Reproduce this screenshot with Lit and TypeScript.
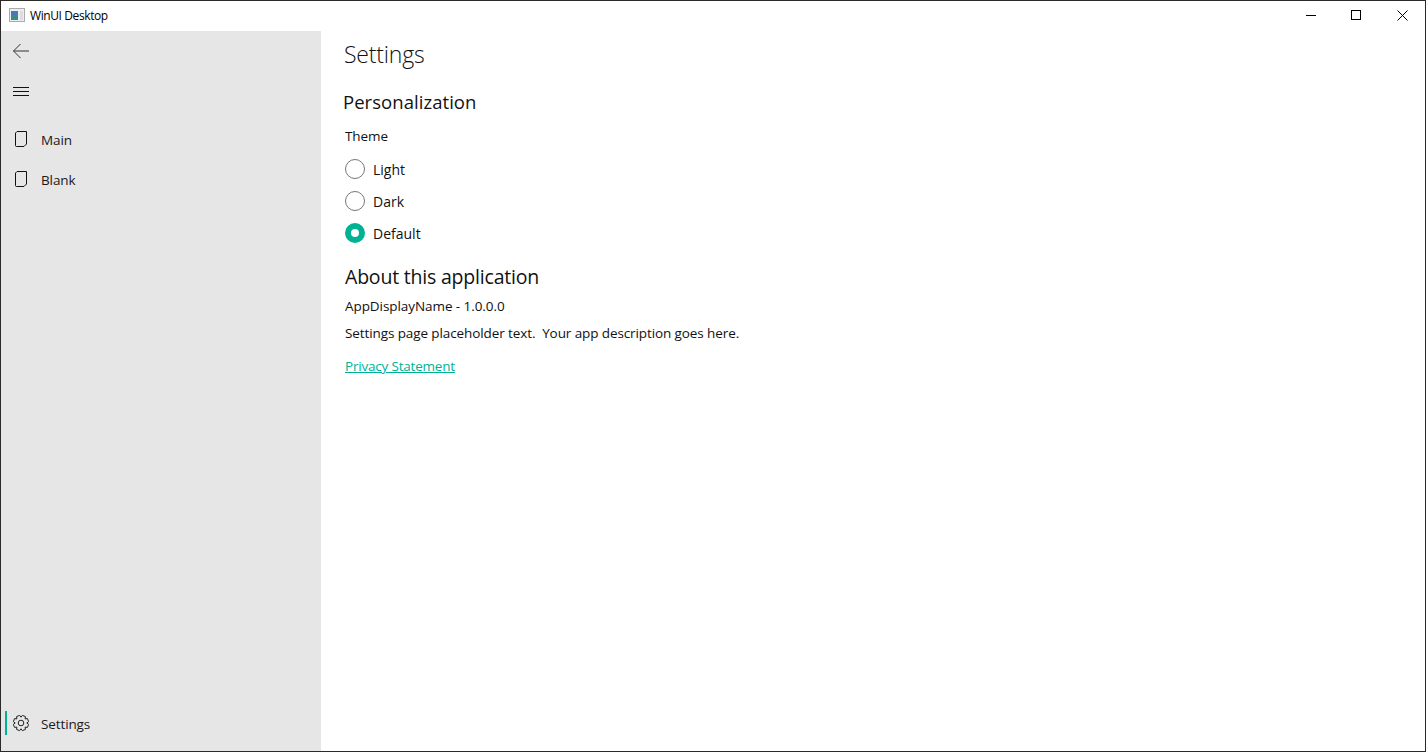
import { LitElement, html, css } from "lit";
import { customElement } from "lit/decorators.js";

function gearPath(cx: number, cy: number, outer: number, inner: number, teeth: number): string {
  const pts: string[] = [];
  const step = (Math.PI * 2) / teeth;
  for (let i = 0; i < teeth; i++) {
    const a = i * step + step / 2;
    const offs: [number, number][] = [
      [-0.5, inner],
      [-0.27, outer],
      [0.27, outer],
      [0.5, inner],
    ];
    for (const [o, r] of offs) {
      const t = a + o * step;
      pts.push(`${(cx + r * Math.cos(t)).toFixed(2)} ${(cy + r * Math.sin(t)).toFixed(2)}`);
    }
  }
  return "M" + pts.join("L") + "Z";
}

@customElement("app-root")
export class AppRoot extends LitElement {
  static styles = css`
    :host { display: block; width: 1426px; height: 752px; font-family: "Open Sans", "Noto Sans", sans-serif; color: #111; }
    * { box-sizing: border-box; }
    .win { width: 1426px; height: 752px; border: 1px solid #2a2a2a; display: flex; flex-direction: column; background: #fff; overflow: hidden; }
    .title { height: 30px; display: flex; align-items: flex-start; flex: none; }
    .appicon { margin: 7px 0 0 8px; width: 16px; height: 14px; flex: none; }
    .apptitle { margin-left: 5px; font-size: 12px; line-height: 29px; letter-spacing: -0.4px; flex: 1; color: #000; }
    .wbtn { width: 45.5px; height: 29px; display: flex; align-items: center; justify-content: center; }
    .body { flex: 1; display: flex; min-height: 0; }
    .nav { width: 320px; background: #e6e6e6; display: flex; flex-direction: column; flex: none; }
    .navicon { height: 40px; padding-left: 12px; display: flex; align-items: center; }
    .item { height: 40px; display: flex; align-items: center; padding-left: 12px; font-size: 13.5px; letter-spacing: -0.12px; color: #1a1a1a; position: relative; }
    .item svg { flex: none; }
    .item span { margin-left: 12px; }
    .items { margin-top: 9px; }
    .spacer { flex: 1; }
    .sel { position: absolute; left: 4px; top: 7px; width: 2px; height: 24px; background: #00b294; }
    .bottom { margin-bottom: 7px; }
    .main { flex: 1; padding-left: 22px; padding-top: 5px; }
    h1 { font-weight: 300; font-size: 23px; line-height: 36px; margin: 0 0 0 1px; letter-spacing: -0.2px; color: #111; }
    h2 { font-weight: 400; font-size: 18.5px; line-height: 26px; margin: 0; letter-spacing: 0.05px; color: #111; }
    .pers { margin-top: 17px; }
    .p { font-size: 13.5px; line-height: 18px; letter-spacing: -0.1px; color: #111; margin-left: 2px; }
    .theme { margin-top: 12px; }
    .radios { margin-top: 8px; margin-left: 2px; display: flex; flex-direction: column; }
    .radio { height: 32px; display: flex; align-items: center; font-size: 14px; letter-spacing: 0; }
    .dot { width: 20px; height: 20px; border-radius: 50%; border: 1.5px solid #767676; margin-right: 8px; flex: none; }
    .dot.on { border: 6px solid #00b294; }
    .about { margin-top: 15px; margin-left: 2px; font-size: 19.5px; letter-spacing: -0.2px; }
    .ver { margin-top: 7px; letter-spacing: -0.07px; }
    .desc { margin-top: 9px; }
    a { display: inline-block; margin: 15px 0 0 2px; font-size: 13.5px; line-height: 18px; letter-spacing: -0.2px; color: #00b294; text-decoration: underline; }
  `;
  render() {
    const page = html`<svg width="16" height="18" viewBox="0 0 16 18" fill="none" stroke="#111" stroke-width="1"><path d="M4 .5H13.5V13L11 15.5H3.5a1 1 0 0 1-1-1V2Z"/></svg>`;
    return html`<div class="win">
      <div class="title">
        <svg class="appicon" viewBox="0 0 16 14"><rect x=".5" y=".5" width="15" height="13" fill="#eee" stroke="#aaa"/><rect x="2" y="3" width="7" height="9" fill="#3a8a8c"/><rect x="2" y="3" width="7" height="4" fill="#4a78b8"/><rect x="11" y="3" width="3" height="9" fill="#ddd"/></svg>
        <div class="apptitle">WinUI Desktop</div>
        <div class="wbtn"><svg width="11" height="11" viewBox="0 0 11 11"><path d="M0 5.5H10" stroke="#000"/></svg></div>
        <div class="wbtn"><svg width="11" height="11" viewBox="0 0 11 11" fill="none"><rect x=".5" y=".5" width="9" height="9" stroke="#000"/></svg></div>
        <div class="wbtn"><svg width="11" height="11" viewBox="0 0 11 11" fill="none"><path d="M.5.5 10.5 10.5M10.5.5.5 10.5" stroke="#000"/></svg></div>
      </div>
      <div class="body">
        <nav class="nav">
          <div class="navicon"><svg width="16" height="16" viewBox="0 0 16 16" fill="none" stroke="#333" stroke-width="1"><path d="M.5 8H16M7.5 1 .5 8l7 7"/></svg></div>
          <div class="navicon"><svg width="16" height="16" viewBox="0 0 16 16" fill="none" stroke="#111" stroke-width="1"><path d="M0 4.5H16M0 8.5H16M0 12.5H16"/></svg></div>
          <div class="items">
            <div class="item">${page}<span>Main</span></div>
            <div class="item">${page}<span>Blank</span></div>
          </div>
          <div class="spacer"></div>
          <div class="item bottom"><div class="sel"></div>
            <svg width="16" height="18" viewBox="0 0 16 18" fill="none" stroke="#222" stroke-width="1"><circle cx="8" cy="8" r="2.8"/><path d="${gearPath(8, 8, 7.8, 5.8, 8)}"/></svg>
            <span>Settings</span></div>
        </nav>
        <main class="main">
          <h1>Settings</h1>
          <h2 class="pers">Personalization</h2>
          <div class="p theme">Theme</div>
          <div class="radios">
            <div class="radio"><div class="dot"></div>Light</div>
            <div class="radio"><div class="dot"></div>Dark</div>
            <div class="radio"><div class="dot on"></div>Default</div>
          </div>
          <h2 class="about">About this application</h2>
          <div class="p ver">AppDisplayName - 1.0.0.0</div>
          <div class="p desc">Settings page placeholder text.&nbsp; Your app description goes here.</div>
          <a href="#">Privacy Statement</a>
        </main>
      </div>
    </div>`;
  }
}
